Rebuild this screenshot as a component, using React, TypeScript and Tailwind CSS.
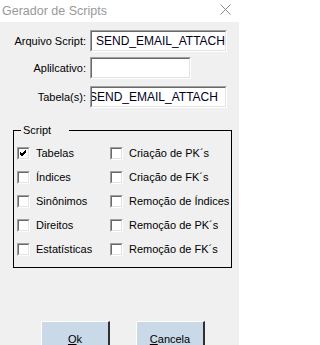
import React from "react";

const font = { fontFamily: '"Liberation Sans", Arial, sans-serif' };

function Sunken({ children, className }: { children?: React.ReactNode; className: string }) {
  return (
    <div className={`border border-t-[#a0a0a0] border-l-[#a0a0a0] border-r-white border-b-white ${className}`}>
      <div className="w-full h-full border border-t-[#696969] border-l-[#696969] border-r-[#e3e3e3] border-b-[#e3e3e3] bg-white overflow-hidden">
        {children}
      </div>
    </div>
  );
}

function Check({ checked, label }: { checked?: boolean; label: string }) {
  return (
    <div className="flex items-center h-[13px] gap-[6px]">
      <Sunken className="w-[13px] h-[13px] shrink-0">
        {checked && (
          <svg width="9" height="9" viewBox="0 0 9 9" className="block">
            <path d="M1 4 L3 6 L7 2 M1 5 L3 7 L7 3 M1 3 L3 5 L7 1" stroke="#000" strokeWidth="1" fill="none" />
          </svg>
        )}
      </Sunken>
      <span className="text-[11px] leading-[13px] text-[#000] whitespace-nowrap">{label}</span>
    </div>
  );
}

function Row({ label, width, value, shift, className }: { label: string; width: string; value?: string; shift?: boolean; className: string }) {
  return (
    <div className={`flex items-center h-[22px] ${className}`}>
      <div className="w-[86px] text-right text-[11px] text-black">{label}</div>
      <Sunken className={`ml-[4px] h-[22px] ${width}`}>
        {value && (
          <div className={`text-[12px] leading-[18px] text-[#00001a] whitespace-nowrap ${shift ? "-ml-[3px]" : "pl-[4px]"}`}>
            {value}
          </div>
        )}
      </Sunken>
    </div>
  );
}

export default function App() {
  return (
    <div className="w-[239px] h-[345px] bg-[#f0f0f0] overflow-hidden" style={font}>
      <div className="h-[22px] bg-white flex items-center justify-between pl-[2px] pr-[8px]">
        <span className="text-[12.5px] text-[#999999]">Gerador de Scripts</span>
        <svg width="11" height="11" viewBox="0 0 11 11" className="-mt-[3px]">
          <path d="M0.5 0.5 L10.5 10.5 M10.5 0.5 L0.5 10.5" stroke="#8a8a8a" strokeWidth="1" />
        </svg>
      </div>
      <div className="pt-[8px]">
        <Row label="Arquivo Script:" width="w-[137px]" value="SEND_EMAIL_ATTACH" className="" />
        <Row label="Aplilcativo:" width="w-[101px]" className="mt-[5px]" />
        <Row label="Tabela(s):" width="w-[137px]" value="SEND_EMAIL_ATTACH" shift className="mt-[7px]" />
      </div>
      <div className="relative mt-[22px] ml-[13px] w-[219px] h-[138px] border border-black pt-[16px] pl-[3px]">
        <span className="absolute -top-[8px] left-[7px] bg-[#f0f0f0] w-[48px] pl-[2px] text-[11px] leading-[14px] text-black">
          Script
        </span>
        <div className="grid grid-cols-[93px_1fr] gap-y-[11px]">
          <Check checked label="Tabelas" />
          <Check label="Criação de PK´s" />
          <Check label="Índices" />
          <Check label="Criação de FK´s" />
          <Check label="Sinônimos" />
          <Check label="Remoção de Índices" />
          <Check label="Direitos" />
          <Check label="Remoção de PK´s" />
          <Check label="Estatísticas" />
          <Check label="Remoção de FK´s" />
        </div>
      </div>
      <div className="flex mt-[53px] ml-[41px] gap-[26px]">
        <button className="w-[69px] h-[32px] bg-[#cad9e8] border-t border-l border-t-white border-l-white border-r-2 border-r-[#303030] text-[11px] text-black flex justify-center pt-[9px]">
          <span><span className="underline">O</span>k</span>
        </button>
        <button className="w-[69px] h-[32px] bg-[#cad9e8] border-t border-l border-t-white border-l-white border-r-2 border-r-[#303030] text-[11px] text-black flex justify-center pt-[9px]">
          <span><span className="underline">C</span>ancela</span>
        </button>
      </div>
    </div>
  );
}
